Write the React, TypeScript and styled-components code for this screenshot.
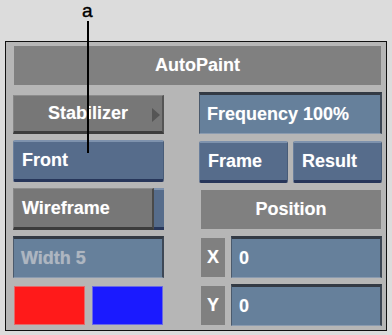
import styled, { createGlobalStyle, css } from "styled-components";

const GlobalStyle = createGlobalStyle`
  html, body {
    margin: 0;
    padding: 0;
    background: #dcdcdc;
  }
  body {
    font-family: "Liberation Sans", Arial, sans-serif;
  }
`;

type Tone = "gray" | "blue";

const App = () => {
  return (
    <Page>
      <GlobalStyle />
      <Callout>a</Callout>
      <CalloutLine />
      <Panel>
        <TitleBar>AutoPaint</TitleBar>
        <Grid>
          <MenuButton>
            Stabilizer
            <Arrow />
          </MenuButton>
          <Field>Frequency 100%</Field>

          <Button $tone="blue">Front</Button>
          <Pair>
            <Button $tone="blue">Frame</Button>
            <Button $tone="blue">Result</Button>
          </Pair>

          <Toggle>
            <ToggleLabel>Wireframe</ToggleLabel>
            <ToggleLight />
          </Toggle>
          <Heading>Position</Heading>

          <Field $dim>Width 5</Field>
          <AxisRow>
            <AxisLabel>X</AxisLabel>
            <Field>0</Field>
          </AxisRow>

          <Swatches>
            <Swatch $color="#ff1a1a" $edge="#e46a6a" />
            <Swatch $color="#1a1aff" $edge="#6a6ae4" />
          </Swatches>
          <AxisRow>
            <AxisLabel>Y</AxisLabel>
            <Field>0</Field>
          </AxisRow>
        </Grid>
      </Panel>
    </Page>
  );
};

export default App;

const Page = styled.div`
  position: relative;
  width: 392px;
  height: 335px;
  overflow: hidden;
  padding-top: 41px;
  box-sizing: border-box;
`;

const Callout = styled.div`
  position: absolute;
  left: 82px;
  top: 0;
  font-size: 19px;
  line-height: 22px;
  color: #000;
  -webkit-text-stroke: 0.4px #000;
  z-index: 2;
`;

const CalloutLine = styled.div`
  position: absolute;
  left: 87px;
  top: 21px;
  width: 2px;
  height: 132px;
  background: #000;
  z-index: 2;
`;

const Panel = styled.div`
  margin-left: 5px;
  width: 382px;
  height: 290px;
  box-sizing: border-box;
  border: 1px solid #111;
  background: #b6b6b6;
  padding: 4px 4px 4px 7px;
`;

const label = css`
  color: #fff;
  font-size: 18px;
  font-weight: bold;
  text-shadow: 0 0 1px rgba(255, 255, 255, 0.3);
  white-space: nowrap;
`;

const TitleBar = styled.div`
  ${label};
  height: 39px;
  margin: 0 1px;
  background: #808080;
  display: flex;
  align-items: center;
  justify-content: center;
`;

const Grid = styled.div`
  margin-top: 7px;
  display: grid;
  grid-template-columns: 151px 183px;
  grid-template-rows: repeat(5, 42px);
  column-gap: 35px;
  row-gap: 6px;
`;

const Button = styled.div<{ $tone: Tone }>`
  ${label};
  box-sizing: border-box;
  height: 42px;
  display: flex;
  align-items: center;
  padding-left: 8px;
  border-radius: 2px;
  ${({ $tone }) =>
    $tone === "blue"
      ? css`
          background: #566c8b;
          border-top: 2px solid #7e92ad;
          border-left: 1px solid #6a7f9c;
          border-right: 1px solid #485c78;
          border-bottom: 3px solid #27365a;
        `
      : css`
          background: #777777;
          border-top: 1px solid #8c8c8c;
          border-left: 1px solid #858585;
          border-right: 2px solid #555555;
          border-bottom: 3px solid #3c3c3c;
        `}
`;

const MenuButton = styled.div`
  ${label};
  position: relative;
  box-sizing: border-box;
  height: 39px;
  margin-top: 3px;
  display: flex;
  align-items: center;
  justify-content: center;
  background: #777777;
  border-top: 1px solid #8c8c8c;
  border-left: 1px solid #858585;
  border-right: 2px solid #555555;
  border-bottom: 3px solid #3c3c3c;
`;

const Arrow = styled.span`
  position: absolute;
  right: 2px;
  top: 12px;
  width: 0;
  height: 0;
  border-top: 7px solid transparent;
  border-bottom: 7px solid transparent;
  border-left: 8px solid #555;
`;

const Pair = styled.div`
  display: grid;
  grid-template-columns: 89px 89px;
  column-gap: 5px;
  margin-top: 1px;
`;

const Toggle = styled.div`
  display: flex;
  height: 42px;
`;

const ToggleLabel = styled.div`
  ${label};
  flex: 1;
  box-sizing: border-box;
  display: flex;
  align-items: center;
  padding-left: 8px;
  background: #777777;
  border-top: 1px solid #8c8c8c;
  border-left: 1px solid #858585;
  border-right: 2px solid #4a4a4a;
  border-bottom: 3px solid #3c3c3c;
`;

const ToggleLight = styled.div`
  width: 10px;
  box-sizing: border-box;
  background: #566c8b;
  border-top: 2px solid #7e92ad;
  border-bottom: 3px solid #27365a;
`;

const Field = styled.div<{ $dim?: boolean }>`
  ${label};
  flex: 1;
  box-sizing: border-box;
  height: 42px;
  display: flex;
  align-items: center;
  padding-left: 7px;
  background: #66809b;
  border-top: 3px solid #333a44;
  border-left: 1px solid #4b5a6c;
  border-right: 2px solid #3e4856;
  border-bottom: 1px solid #8a9bb0;
  color: ${({ $dim }) => ($dim ? "#aeb6c0" : "#fff")};
`;

const Heading = styled.div`
  ${label};
  height: 39px;
  margin: 2px 1px 0 2px;
  background: #808080;
  display: flex;
  align-items: center;
  justify-content: center;
`;

const AxisRow = styled.div`
  display: flex;
  gap: 6px;
  align-items: flex-start;
`;

const AxisLabel = styled.div`
  ${label};
  width: 24px;
  height: 39px;
  margin: 2px 0 0 2px;
  background: #808080;
  display: flex;
  align-items: center;
  justify-content: center;
`;

const Swatches = styled.div`
  display: grid;
  grid-template-columns: 71px 71px;
  column-gap: 7px;
  padding: 2px 0 0 1px;
`;

const Swatch = styled.div<{ $color: string; $edge: string }>`
  height: 39px;
  box-sizing: border-box;
  background: ${({ $color }) => $color};
  border: 1px solid ${({ $edge }) => $edge};
`;
